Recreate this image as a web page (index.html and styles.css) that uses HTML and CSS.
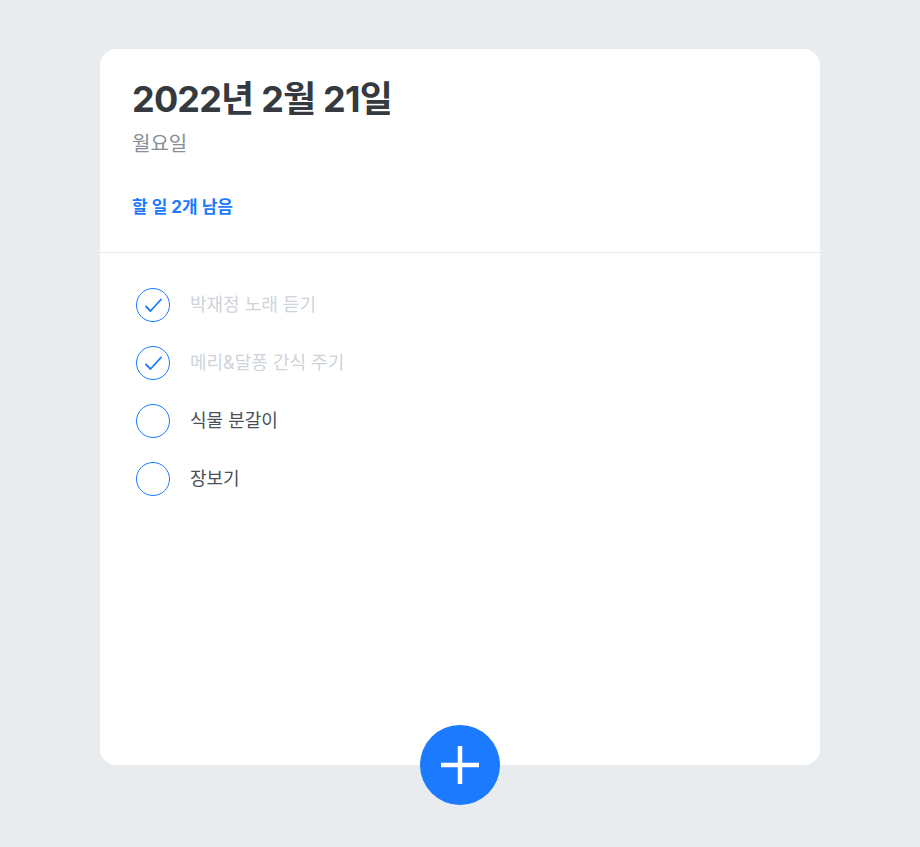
FILE: index.html
```html
<!DOCTYPE html>
<html lang="ko">
<head>
<meta charset="utf-8">
<title>Todo</title>
<link rel="stylesheet" href="styles.css">
</head>
<body>
<div class="card">
  <header class="head">
    <h1 class="date">2022년 2월 21일</h1>
    <div class="day">월요일</div>
    <div class="left">할 일 2개 남음</div>
  </header>
  <ul class="list">
    <li class="item done">
      <svg class="check" viewBox="0 0 34 34" width="34" height="34"><circle cx="17" cy="17" r="16.5" fill="none" stroke="#1c7aff" stroke-width="1"/><polyline points="10,18.5 14.5,23 25,11.5" fill="none" stroke="#1c7aff" stroke-width="1.8" stroke-linecap="round" stroke-linejoin="round"/></svg>
      <span class="text">박재정 노래 듣기</span>
    </li>
    <li class="item done">
      <svg class="check" viewBox="0 0 34 34" width="34" height="34"><circle cx="17" cy="17" r="16.5" fill="none" stroke="#1c7aff" stroke-width="1"/><polyline points="10,18.5 14.5,23 25,11.5" fill="none" stroke="#1c7aff" stroke-width="1.8" stroke-linecap="round" stroke-linejoin="round"/></svg>
      <span class="text">메리&amp;달퐁 간식 주기</span>
    </li>
    <li class="item">
      <svg class="check" viewBox="0 0 34 34" width="34" height="34"><circle cx="17" cy="17" r="16.5" fill="none" stroke="#1c7aff" stroke-width="1"/></svg>
      <span class="text">식물 분갈이</span>
    </li>
    <li class="item">
      <svg class="check" viewBox="0 0 34 34" width="34" height="34"><circle cx="17" cy="17" r="16.5" fill="none" stroke="#1c7aff" stroke-width="1"/></svg>
      <span class="text">장보기</span>
    </li>
  </ul>
  <button class="add" aria-label="추가">
    <svg viewBox="0 0 80 80" width="80" height="80"><path d="M40 21V59M21 40H59" stroke="#fff" stroke-width="4.5" fill="none"/></svg>
  </button>
</div>
</body>
</html>
```
FILE: styles.css
```css
html, body {
  margin: 0;
  padding: 0;
}
body {
  background: #e9ecef;
  font-family: Inter, "Noto Sans CJK KR", sans-serif;
  height: 847px;
}
.card {
  position: relative;
  width: 720px;
  height: 716px;
  margin: 49px auto 0;
  background: #fff;
  border-radius: 16px;
  display: flex;
  flex-direction: column;
  box-sizing: border-box;
}
.head {
  padding: 28px 32px 33px;
  border-bottom: 1px solid #e9ecef;
}
.date {
  margin: 0;
  font-size: 36px;
  line-height: 44px;
  font-weight: 700;
  color: #343a40;
  letter-spacing: -0.8px;
}
.day {
  margin-top: 9px;
  font-size: 20px;
  line-height: 28px;
  color: #868e96;
}
.left {
  margin-top: 37px;
  font-size: 17px;
  line-height: 24px;
  font-weight: 700;
  color: #1c7aff;
}
.list {
  list-style: none;
  margin: 0;
  padding: 23px 32px 0 36px;
  flex: 1;
}
.item {
  display: flex;
  align-items: center;
  padding: 12px 0;
}
.check {
  display: block;
  flex: none;
  margin-right: 20px;
}
.text {
  font-size: 18px;
  line-height: 26px;
  color: #495057;
}
.item.done .text {
  color: #ced4da;
}
.add {
  position: absolute;
  left: 50%;
  bottom: 0;
  transform: translate(-50%, 50%);
  width: 80px;
  height: 80px;
  border: none;
  border-radius: 50%;
  padding: 0;
  background: #1c7aff;
  display: flex;
  align-items: center;
  justify-content: center;
  cursor: pointer;
}
.add svg {
  display: block;
}
```
